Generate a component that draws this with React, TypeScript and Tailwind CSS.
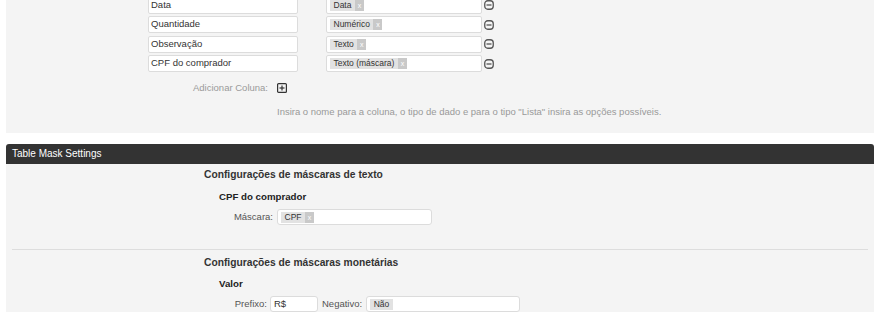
const rows = [
  { name: "Data", type: "Data" },
  { name: "Quantidade", type: "Numérico" },
  { name: "Observação", type: "Texto" },
  { name: "CPF do comprador", type: "Texto (máscara)" },
];

function Tag({ label, removable = true }: { label: string; removable?: boolean }) {
  return (
    <span className="flex h-[11px] items-stretch bg-[#e2e2e2] text-[8.5px] leading-[11px] text-[#333]">
      <span className="px-[3.5px]">{label}</span>
      {removable && (
        <span className="flex w-[9px] items-center justify-center bg-[#c9c9c9] text-[7px] text-white">x</span>
      )}
    </span>
  );
}

function MinusIcon() {
  return (
    <svg width="10" height="10" viewBox="0 0 10 10" className="shrink-0">
      <rect x="0.75" y="0.75" width="8.5" height="8.5" rx="3" fill="none" stroke="#555" strokeWidth="1.3" />
      <line x1="2.5" y1="5" x2="7.5" y2="5" stroke="#555" strokeWidth="1.3" />
    </svg>
  );
}

function PlusIcon() {
  return (
    <svg width="10" height="10" viewBox="0 0 10 10" className="shrink-0">
      <rect x="0.6" y="0.6" width="8.8" height="8.8" rx="1" fill="none" stroke="#333" strokeWidth="1.2" />
      <line x1="2.5" y1="5" x2="7.5" y2="5" stroke="#333" strokeWidth="1.2" />
      <line x1="5" y1="2.5" x2="5" y2="7.5" stroke="#333" strokeWidth="1.2" />
    </svg>
  );
}

export default function App() {
  return (
    <div className="h-[312px] w-[880px] overflow-hidden bg-white font-['Liberation_Sans',Arial,sans-serif]">
      {/* column definitions */}
      <div className="mx-[6px] bg-[#f4f4f4] pb-[15px]">
        <div className="-mt-[3.5px] flex flex-col gap-[2.5px] pl-[142px]">
          {rows.map((r) => (
            <div key={r.name} className="flex items-center">
              <div className="flex h-[17px] w-[150px] items-center rounded-[2px] border border-[#dcdcdc] bg-white pl-[2px] text-[9.5px] text-[#333]">
                {r.name}
              </div>
              <div className="ml-[28px] flex h-[17px] w-[156px] items-center rounded-[2px] border border-[#dcdcdc] bg-white pl-[3px]">
                <Tag label={r.type} />
              </div>
              <div className="ml-[2px]">
                <MinusIcon />
              </div>
            </div>
          ))}
        </div>

        <div className="mt-[7.5px] flex h-[17px] items-center">
          <div className="w-[264px] pr-[2px] text-right text-[9.5px] text-[#9a9a9a]">Adicionar Coluna:</div>
          <div className="ml-[7px]">
            <PlusIcon />
          </div>
        </div>

        <p className="mt-[9.5px] pl-[271px] text-[9.5px] leading-[12px] text-[#999]">
          Insira o nome para a coluna, o tipo de dado e para o tipo "Lista" insira as opções possíveis.
        </p>
      </div>

      {/* mask settings */}
      <div className="mx-[6px] mt-[11px]">
        <div className="h-[20px] rounded-t-[3px] bg-[#333] px-[6px] text-[10px] leading-[20px] text-white">
          Table Mask Settings
        </div>
        <div className="h-[200px] bg-[#f4f4f4] pt-[4px]">
          <h3 className="pl-[198px] text-[10.25px] font-bold leading-[14px] text-[#333]">
            Configurações de máscaras de texto
          </h3>
          <h4 className="mt-[8px] pl-[213px] text-[9.7px] font-bold leading-[13px] text-[#222]">CPF do comprador</h4>
          <div className="mt-[6px] flex items-center">
            <div className="w-[267px] text-right text-[9.5px] text-[#555]">Máscara:</div>
            <div className="ml-[4px] flex h-[16px] w-[155px] items-center rounded-[3px] border border-[#dcdcdc] bg-white pl-[3px]">
              <Tag label="CPF" />
            </div>
          </div>

          <div className="mx-[6px] mt-[24px] border-t border-[#dddddd]" />

          <h3 className="mt-[6px] pl-[198px] text-[10.25px] font-bold leading-[14px] text-[#333]">
            Configurações de máscaras monetárias
          </h3>
          <h4 className="mt-[6.5px] pl-[213px] text-[9.7px] font-bold leading-[13px] text-[#222]">Valor</h4>
          <div className="mt-[6.5px] flex items-center text-[9.5px] text-[#555]">
            <div className="w-[261px] text-right">Prefixo:</div>
            <div className="ml-[3px] flex h-[16px] w-[48px] items-center rounded-[3px] border border-[#dcdcdc] bg-white pl-[3px] text-[#333]">
              R$
            </div>
            <div className="ml-[4px]">Negativo:</div>
            <div className="ml-[4px] flex h-[16px] w-[154px] items-center rounded-[3px] border border-[#dcdcdc] bg-white pl-[3px]">
              <Tag label="Não" removable={false} />
            </div>
          </div>
        </div>
      </div>
    </div>
  );
}
